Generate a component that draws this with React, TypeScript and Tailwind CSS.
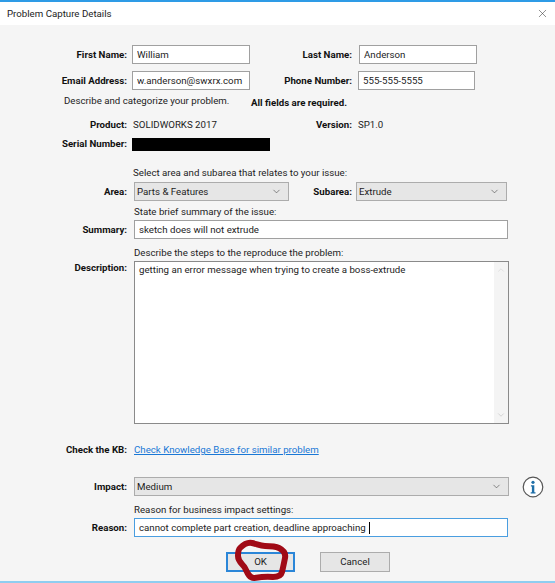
import { ChevronDown, X } from 'lucide-react';
import type { ReactNode } from 'react';

const inputBox =
  'h-[19px] border border-[#a0a0a0] bg-white px-[4px] text-[9.7px] text-[#1c1c1c] outline-none';

function Label({ children, className = '' }: { children: ReactNode; className?: string }) {
  return (
    <span className={`shrink-0 text-right font-bold text-[#111] ${className}`}>{children}</span>
  );
}

function Select({ value, className }: { value: string; className: string }) {
  return (
    <div
      className={`flex h-[19px] shrink-0 items-center justify-between border border-[#acacac] bg-[#e6e6e6] pr-[6px] pl-[2px] text-[#1c1c1c] ${className}`}
    >
      <span>{value}</span>
      <ChevronDown size={11} strokeWidth={1.2} color="#333" />
    </div>
  );
}

export default function App() {
  return (
    <div className="relative flex h-[583px] w-[555px] flex-col overflow-hidden bg-[#f5f5f5] font-['Roboto',sans-serif] text-[9.7px] leading-[14px] text-[#1c1c1c]">
      <div className="flex h-[25px] shrink-0 items-center justify-between border-t-2 border-[#2e9be6] bg-white pr-[6px] pl-[7px]">
        <span>Problem Capture Details</span>
        <X size={13} strokeWidth={1} color="#333" />
      </div>

      <div className="flex flex-col">
        <div className="mt-[20px] flex h-[19px] items-center">
          <Label className="w-[127px]">First Name:</Label>
          <input defaultValue="William" className={`${inputBox} ml-[5px] w-[118px]`} />
          <Label className="w-[102px]">Last Name:</Label>
          <input defaultValue="Anderson" className={`${inputBox} ml-[7px] w-[118px]`} />
        </div>
        <div className="mt-[7px] flex h-[19px] items-center">
          <Label className="w-[127px]">Email Address:</Label>
          <input defaultValue="w.anderson@swxrx.com" className={`${inputBox} ml-[5px] w-[118px]`} />
          <Label className="w-[102px]">Phone Number:</Label>
          <input defaultValue="555-555-5555" className={`${inputBox} ml-[6px] w-[117px]`} />
        </div>
        <div className="mt-[4px] flex h-[14px] items-center">
          <span className="ml-[64px] w-[187px]">Describe and categorize your problem.</span>
          <span className="mt-[3px] font-bold text-[#111]">All fields are required.</span>
        </div>
        <div className="mt-[10px] flex h-[14px] items-center">
          <Label className="w-[127px]">Product:</Label>
          <span className="ml-[6px] w-[117px]">SOLIDWORKS 2017</span>
          <Label className="w-[102px]">Version:</Label>
          <span className="ml-[6px]">SP1.0</span>
        </div>
        <div className="mt-[5px] flex h-[14px] items-center">
          <Label className="w-[127px]">Serial Number:</Label>
          <div className="ml-[5px] h-[13px] w-[138px] bg-black" />
        </div>
        <div className="mt-[15px] ml-[133px] h-[14px]">
          Select area and subarea that relates to your issue:
        </div>
        <div className="mt-[2px] flex h-[19px] items-center">
          <Label className="w-[127px]">Area:</Label>
          <Select value="Parts & Features" className="ml-[7px] w-[155px]" />
          <Label className="w-[63px]">Subarea:</Label>
          <Select value="Extrude" className="ml-[4px] w-[151px]" />
        </div>
        <div className="mt-[4px] ml-[134px] h-[14px]">State brief summary of the issue:</div>
        <div className="mt-[1px] flex h-[19px] items-center">
          <Label className="w-[127px]">Summary:</Label>
          <input defaultValue="sketch does will not extrude" className={`${inputBox} ml-[7px] w-[374px]`} />
        </div>
        <div className="mt-[7px] ml-[134px] h-[14px]">Describe the steps to the reproduce the problem:</div>
        <div className="mt-[1px] flex items-start">
          <Label className="w-[127px]">Description:</Label>
          <div className="ml-[7px] flex h-[163px] w-[375px] border border-[#8a8a8a] bg-white">
            <div className="flex-1 px-[4px] py-[1px]">
              getting an error message when trying to create a boss-extrude
            </div>
            <div className="flex w-[14px] flex-col items-center justify-between bg-[#f4f4f4] py-[3px]">
              <ChevronDown size={10} strokeWidth={1} color="#c4c4c4" className="rotate-180" />
              <ChevronDown size={10} strokeWidth={1} color="#a8a8a8" />
            </div>
          </div>
        </div>
        <div className="mt-[19px] flex h-[14px] items-center">
          <Label className="w-[127px]">Check the KB:</Label>
          <a className="ml-[7px] text-[#1a78d6] underline">Check Knowledge Base for similar problem</a>
        </div>
        <div className="mt-[20px] flex h-[19px] items-center">
          <Label className="w-[127px]">Impact:</Label>
          <Select value="Medium" className="ml-[7px] w-[375px]" />
          <svg width="22" height="22" viewBox="0 0 22 22" className="ml-[13px] shrink-0">
            <circle cx="11" cy="11" r="9.8" fill="#fff" stroke="#555" strokeWidth="1.2" />
            <circle cx="11" cy="6.3" r="1.6" fill="#1f6fa8" />
            <path d="M8.9 9.3h3.4v7h1.2v1.2H8.7v-1.2h1.2v-5.8H8.9z" fill="#1f6fa8" />
          </svg>
        </div>
        <div className="mt-[7px] ml-[134px] h-[14px]">Reason for business impact settings:</div>
        <div className="mt-[1px] flex h-[19px] items-center">
          <Label className="w-[127px]">Reason:</Label>
          <div className="ml-[7px] flex h-[19px] w-[374px] items-center border border-[#4a9ee0] bg-white px-[4px]">
            <span>cannot complete part creation, deadline approaching</span>
            <span className="ml-[3px] h-[12px] w-px bg-black" />
          </div>
        </div>
        <div className="mt-[15px] flex h-[20px]">
          <button className="ml-[226px] w-[69px] border-2 border-[#2b86d8] bg-[#e6e6e6]">OK</button>
          <button className="ml-[25px] w-[70px] border border-[#acacac] bg-[#e6e6e6]">Cancel</button>
        </div>
      </div>

      <div className="mt-auto h-[2px] bg-[#8fcdf0]" />

      {/* hand drawn marker ring over the OK button */}
      <svg width="555" height="583" className="pointer-events-none absolute top-0 left-0">
        <path
          d="M240 548 C243 545 247 542 252 543 C257 544 260 546 265 546 C270 546 275 546 279 548 C283 550 286 553 285 558 C284 563 283 568 282 572 C281 576 278 577 273 577 C267 576 260 577 254 578 C249 578 247 572 245 568 C243 564 238 562 238 556 C238 553 238 550 240 548 Z"
          fill="none"
          stroke="#a00a16"
          strokeWidth="6"
          strokeLinejoin="round"
        />
      </svg>
    </div>
  );
}
